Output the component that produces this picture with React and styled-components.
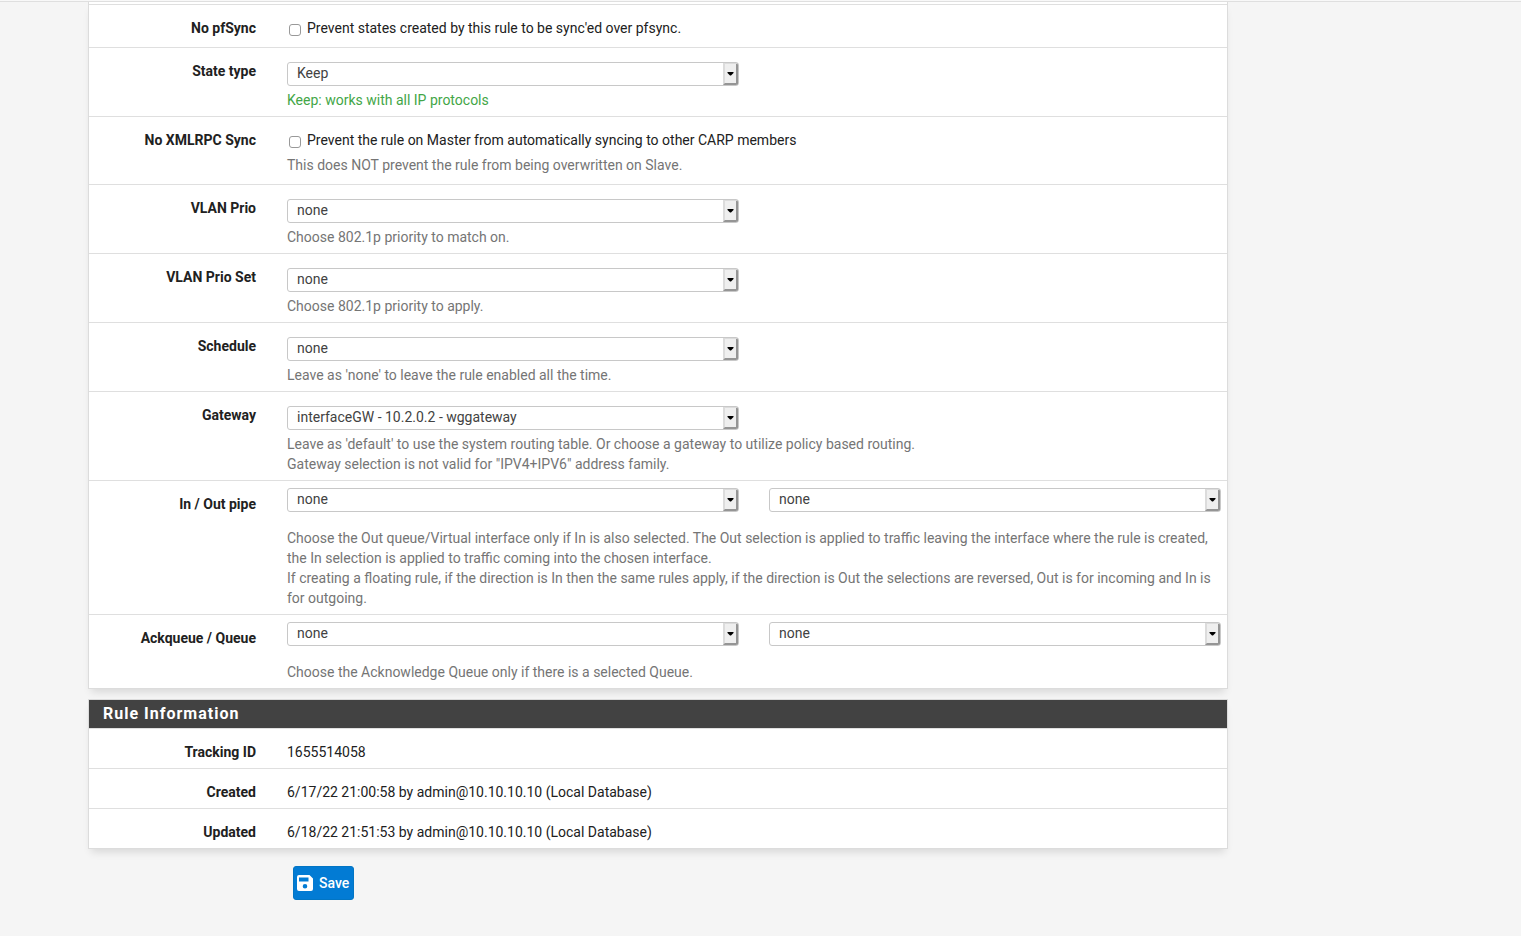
import React from "react";
import styled, { createGlobalStyle } from "styled-components";

const GlobalStyle = createGlobalStyle`
  *, *::before, *::after { box-sizing: border-box; }
  body {
    margin: 0;
    background: #f5f5f5;
    color: #212121;
    font: 14px/20px Roboto, "Liberation Sans", sans-serif;
  }
`;

const TopBar = styled.header`
  height: 2px;
  background: #f8f8f8;
  border-bottom: 1px solid #dfdfdf;
`;

const Content = styled.main`
  max-width: 1228px;
  padding-left: 88px;
`;

const Panel = styled.section`
  margin-bottom: 10px;
  background: #fff;
  border: 1px solid #dcdcdc;
  border-top-width: ${(p) => (p.$continued ? 0 : 1)}px;
  padding-top: ${(p) => (p.$continued ? 2 : 0)}px;
  box-shadow: 0 6px 8px -3px rgba(0, 0, 0, 0.12);
`;

const PanelHeading = styled.h2`
  margin: 0;
  padding: 4px 14px;
  background: #424242;
  color: #fff;
  font-size: 16px;
  line-height: 20px;
  font-weight: 700;
  letter-spacing: 1px;
`;

const Row = styled.div`
  display: grid;
  grid-template-columns: 167px minmax(0, 1fr);
  column-gap: 31px;
  border-top: 1px solid #dfdfdf;
  padding: 0 6px 6px 0;
`;

const labelText = `
  padding-top: 13px;
  text-align: right;
  font-weight: 700;
`;
const RowLabel = styled.label`${labelText}`;
const RowTitle = styled.div`${labelText}`;

const Field = styled.div`
  padding-top: ${(p) => p.$top || 14}px;
  padding-bottom: ${(p) => p.$bottom || 0}px;
`;

const Columns = styled.div`
  display: grid;
  grid-template-columns: repeat(2, minmax(0, 1fr));
  column-gap: 30px;
`;

const SelectBox = styled.div`
  position: relative;
  height: 24px;
`;

const SelectInput = styled.select`
  display: block;
  appearance: none;
  width: 100%;
  height: 24px;
  padding: 0 24px 2px 9px;
  border: 1px solid #c8c8c8;
  border-radius: 3px;
  background: #fff;
  color: #424242;
  font: inherit;
`;

const SelectArrow = styled.span`
  position: absolute;
  top: 1px;
  right: 1px;
  bottom: 1px;
  width: 15px;
  display: flex;
  align-items: center;
  justify-content: center;
  pointer-events: none;
  background: #efefef;
  border: 2px solid;
  border-color: #dcdcdc #959595 #959595 #dcdcdc;
  border-top-width: 1px;
  border-radius: 0 2px 2px 0;
`;

const Help = styled.p`
  margin: ${(p) => p.$gap || 4}px 0 0;
  color: ${(p) => (p.$success ? "#43a647" : "#757575")};
`;

const CheckLabel = styled.label`
  display: flex;
  align-items: center;
  gap: 6px;
  padding-left: 2px;
`;

const CheckBox = styled.input`
  appearance: none;
  width: 12px;
  height: 12px;
  margin: 3px 0 0;
  border: 1px solid #999;
  border-radius: 3px;
  background: #fff;
`;

const SaveButton = styled.button`
  display: flex;
  align-items: center;
  gap: 6px;
  height: 34px;
  margin: 17px 0 36px 205px;
  padding: 0 4px 1px 3px;
  border: 1px solid #0275c4;
  border-radius: 3px;
  background: #027bd4;
  color: #fff;
  font: inherit;
  font-weight: 500;
`;

function Select({ value, ...rest }) {
  return (
    <SelectBox>
      <SelectInput defaultValue={value} {...rest}>
        <option>{value}</option>
      </SelectInput>
      <SelectArrow>
        <svg width="7" height="4" viewBox="0 0 7 4" aria-hidden="true">
          <path d="M0.500 0h6v1L4 3.500H3L0.500 1z" fill="#000" />
        </svg>
      </SelectArrow>
    </SelectBox>
  );
}

function SelectRow({ id, label, value, success, children }) {
  return (
    <Row>
      <RowLabel htmlFor={id}>{label}</RowLabel>
      <Field>
        <Columns>
          <Select id={id} value={value} />
        </Columns>
        <Help $success={success}>{children}</Help>
      </Field>
    </Row>
  );
}

function CheckRow({ id, label, text, help }) {
  return (
    <Row>
      <RowTitle>{label}</RowTitle>
      <Field $top={13} $bottom={3}>
        <CheckLabel htmlFor={id}>
          <CheckBox type="checkbox" id={id} />
          {text}
        </CheckLabel>
        {help && <Help $gap={5}>{help}</Help>}
      </Field>
    </Row>
  );
}

function PairRow({ id, label, names, children }) {
  return (
    <Row>
      <RowLabel htmlFor={id}>{label}</RowLabel>
      <Field $top={7}>
        <Columns>
          <Select id={id} value="none" />
          <Select aria-label={names} value="none" />
        </Columns>
        <Help $gap={16}>{children}</Help>
      </Field>
    </Row>
  );
}

function InfoRow({ label, children }) {
  return (
    <Row>
      <RowTitle>{label}</RowTitle>
      <Field $top={13}>{children}</Field>
    </Row>
  );
}

export default function App() {
  return (
    <>
      <GlobalStyle />
      <TopBar />
      <Content>
        <Panel $continued>
          <CheckRow
            id="nopfsync"
            label="No pfSync"
            text="Prevent states created by this rule to be sync'ed over pfsync."
          />
          <SelectRow id="statetype" label="State type" value="Keep" success>
            Keep: works with all IP protocols
          </SelectRow>
          <CheckRow
            id="nosync"
            label="No XMLRPC Sync"
            text="Prevent the rule on Master from automatically syncing to other CARP members"
            help="This does NOT prevent the rule from being overwritten on Slave."
          />
          <SelectRow id="vlanprio" label="VLAN Prio" value="none">
            Choose 802.1p priority to match on.
          </SelectRow>
          <SelectRow id="vlanprioset" label="VLAN Prio Set" value="none">
            Choose 802.1p priority to apply.
          </SelectRow>
          <SelectRow id="sched" label="Schedule" value="none">
            Leave as 'none' to leave the rule enabled all the time.
          </SelectRow>
          <SelectRow id="gateway" label="Gateway" value="interfaceGW - 10.2.0.2 - wggateway">
            Leave as 'default' to use the system routing table. Or choose a gateway to utilize policy based routing.
            <br />
            Gateway selection is not valid for "IPV4+IPV6" address family.
          </SelectRow>
          <PairRow id="dnpipe" label="In / Out pipe" names="Out pipe">
            Choose the Out queue/Virtual interface only if In is also selected. The Out selection is applied to
            traffic leaving the interface where the rule is created, the In selection is applied to traffic coming
            into the chosen interface.
            <br />
            If creating a floating rule, if the direction is In then the same rules apply, if the direction is Out
            the selections are reversed, Out is for incoming and In is for outgoing.
          </PairRow>
          <PairRow id="ackqueue" label="Ackqueue / Queue" names="Queue">
            Choose the Acknowledge Queue only if there is a selected Queue.
          </PairRow>
        </Panel>
        <Panel>
          <PanelHeading>Rule Information</PanelHeading>
          <InfoRow label="Tracking ID">1655514058</InfoRow>
          <InfoRow label="Created">6/17/22 21:00:58 by admin@10.10.10.10 (Local Database)</InfoRow>
          <InfoRow label="Updated">6/18/22 21:51:53 by admin@10.10.10.10 (Local Database)</InfoRow>
        </Panel>
        <SaveButton type="button">
          <svg width="16" height="16" viewBox="0 0 16 16" aria-hidden="true">
            <path
              fill="#fff"
              fillRule="evenodd"
              d="M2 0h10.500L16 3.500V14a2 2 0 0 1-2 2H2a2 2 0 0 1-2-2V2a2 2 0 0 1 2-2zM2 2.500v4h9.500v-4zM8 9a2.300 2.300 0 1 0 0 4.600A2.300 2.300 0 0 0 8 9z"
            />
          </svg>
          Save
        </SaveButton>
      </Content>
    </>
  );
}
